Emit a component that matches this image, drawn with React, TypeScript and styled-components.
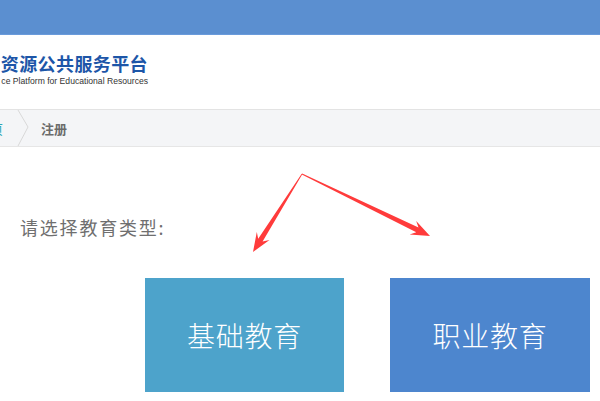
import React from "react";
import styled, { createGlobalStyle } from "styled-components";

const GlobalStyle = createGlobalStyle`
  html, body {
    margin: 0;
    padding: 0;
    background: #ffffff;
    font-family: "Noto Sans CJK SC", "Liberation Sans", sans-serif;
  }
`;

const Page = styled.div`
  position: relative;
  width: 600px;
  height: 401px;
  overflow: hidden;
  background: #ffffff;
`;

const TopBar = styled.div`
  height: 34px;
  background: #5b8fd0;
  border-bottom: 1px solid #6a9bdb;
`;

const Header = styled.div`
  height: 74px;
  box-sizing: border-box;
  padding-top: 18px;
`;

const Logo = styled.div`
  width: 148px;
  display: flex;
  flex-direction: column;
  align-items: flex-end;
  white-space: nowrap;
`;

const LogoTitle = styled.div`
  font-family: "Noto Sans CJK SC", sans-serif;
  font-weight: 700;
  font-size: 18px;
  line-height: 21px;
  letter-spacing: 0.4px;
  color: #1d56a8;
`;

const LogoSub = styled.div`
  font-family: "Liberation Sans", Arial, sans-serif;
  font-size: 8.6px;
  line-height: 10px;
  margin-top: 2px;
  color: #333333;
`;

const Crumbs = styled.div`
  height: 38px;
  box-sizing: border-box;
  display: flex;
  align-items: stretch;
  background: #f4f5f7;
  border-top: 1px solid #e3e3e3;
  border-bottom: 1px solid #e6e6e6;
`;

const Crumb = styled.span<{ $active?: boolean; $shift?: number }>`
  display: flex;
  align-items: center;
  margin-left: ${(p) => p.$shift ?? 0}px;
  font-size: 13px;
  font-weight: ${(p) => (p.$active ? 700 : 400)};
  color: ${(p) => (p.$active ? "#6b6b6b" : "#2aa6b4")};
  white-space: nowrap;
`;

const Sep = styled.svg`
  display: block;
  width: 12px;
  height: 36px;
  margin: 0 12px 0 14px;
`;

const Content = styled.div`
  padding: 68px 0 0 20px;
`;

const Label = styled.div`
  font-family: "Noto Sans CJK SC", serif;
  font-size: 18px;
  line-height: 24px;
  letter-spacing: 1.8px;
  color: #6f6f6f;
`;

const Choices = styled.div`
  display: flex;
  gap: 46px;
  margin: 39px 0 0 125px;
`;

const Choice = styled.div<{ $bg: string; $w: number }>`
  width: ${(p) => p.$w}px;
  height: 114px;
  display: flex;
  align-items: center;
  justify-content: center;
  background: ${(p) => p.$bg};
  color: #ffffff;
  font-family: "Noto Sans CJK SC", sans-serif;
  font-weight: 300;
  font-size: 28px;
  letter-spacing: 0.8px;
`;

const Overlay = styled.svg`
  position: absolute;
  left: 0;
  top: 0;
  pointer-events: none;
`;

type Pt = [number, number];

function arrowPoints(from: Pt, to: Pt): string {
  const dx = to[0] - from[0];
  const dy = to[1] - from[1];
  const len = Math.hypot(dx, dy);
  const ux = dx / len;
  const uy = dy / len;
  const nx = -uy;
  const ny = ux;
  const head = 19;
  const notch = 14;
  const at = (d: number, w: number): string =>
    `${(from[0] + ux * d + nx * w).toFixed(1)},${(from[1] + uy * d + ny * w).toFixed(1)}`;
  return [
    at(0, 0.4),
    at(len - notch, 2.6),
    at(len - head, 7.5),
    at(len, 0),
    at(len - head, -7.5),
    at(len - notch, -2.6),
    at(0, -0.4),
  ].join(" ");
}

const apex: Pt = [302, 174];

export default function App() {
  return (
    <>
      <GlobalStyle />
      <Page>
        <TopBar />
        <Header>
          <Logo>
            <LogoTitle>资源公共服务平台</LogoTitle>
            <LogoSub>ce Platform for Educational Resources</LogoSub>
          </Logo>
        </Header>
        <Crumbs>
          <Crumb $shift={-23}>首页</Crumb>
          <Sep viewBox="0 0 12 36">
            <polyline points="1,0 11,17 1,36" fill="none" stroke="#d8d8d8" strokeWidth="1" />
          </Sep>
          <Crumb $active>注册</Crumb>
        </Crumbs>
        <Content>
          <Label>请选择教育类型:</Label>
          <Choices>
            <Choice $bg="#4da3cb" $w={199}>基础教育</Choice>
            <Choice $bg="#4d86ce" $w={200}>职业教育</Choice>
          </Choices>
        </Content>
        <Overlay width="600" height="401" viewBox="0 0 600 401">
          <polygon points={arrowPoints(apex, [253, 252])} fill="#ff3b3b" />
          <polygon points={arrowPoints(apex, [430, 236])} fill="#ff3b3b" />
        </Overlay>
      </Page>
    </>
  );
}
